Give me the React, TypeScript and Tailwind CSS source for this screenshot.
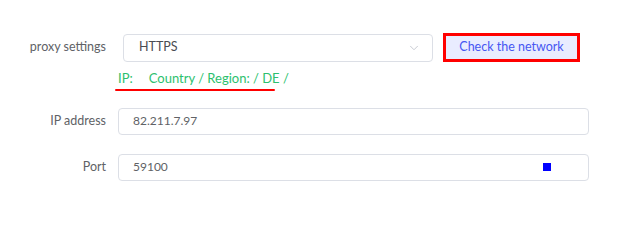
import { ChevronDown } from "lucide-react"

const font = { fontFamily: "Lato, 'Noto Sans', sans-serif" }

function Label({ children }: { children: React.ReactNode }) {
  return <div className="w-[106px] shrink-0 text-right text-[12.5px] text-[#606266]">{children}</div>
}

export default function App() {
  return (
    <div className="h-[209px] w-[618px] bg-white pt-[33px] text-[12.5px]" style={font}>
      <div className="flex items-center">
        <Label>proxy settings</Label>
        <div className="ml-[17px] flex h-[28px] w-[310px] items-center justify-between rounded border border-[#dcdfe6] pl-[15px] pr-[11px] text-[#4a4c52]">
          <span>HTTPS</span>
          <ChevronDown className="h-[14px] w-[14px] text-[#c0c4cc]" strokeWidth={1.5} />
        </div>
        <button className="ml-[10px] flex h-[29px] w-[137px] items-center justify-center border-[3px] border-[#ff0000] bg-[#e9ecff] text-[12.5px] text-[#4656f2]">
          Check the network
        </button>
      </div>

      <div className="ml-[118px] mt-[7px] flex w-fit flex-col">
        <div className="flex text-[13px] text-[#2dbf6e]">
          <span>IP:</span>
          <span className="ml-[16px]">Country / Region: / DE /</span>
        </div>
        <div className="-ml-[3px] h-[2px] w-[160px] rounded-full bg-[#ff0000]" />
      </div>

      <div className="mt-[17px] flex items-center">
        <Label>IP address</Label>
        <div className="ml-[12px] flex h-[27px] w-[471px] items-center rounded border border-[#dcdfe6] pl-[14px] text-[12px] text-[#606266]">
          82.211.7.97
        </div>
      </div>

      <div className="mt-[19px] flex items-center">
        <Label>Port</Label>
        <div className="ml-[12px] flex h-[27px] w-[471px] items-center justify-between rounded border border-[#dcdfe6] pl-[14px] pr-[37px] text-[12px] text-[#606266]">
          <span>59100</span>
          <span className="h-[8px] w-[8px] bg-[#0000ff]" />
        </div>
      </div>
    </div>
  )
}
